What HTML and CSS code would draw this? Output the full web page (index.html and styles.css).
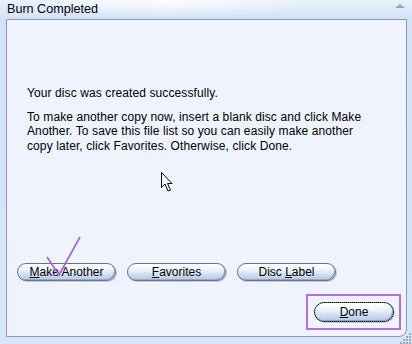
FILE: index.html
```html
<!DOCTYPE html>
<html lang="en">
<head>
    <meta charset="UTF-8">
    <meta name="viewport" content="width=device-width, initial-scale=1.0">
    <title>Burn Completed</title>
    <link rel="stylesheet" href="styles.css">
</head>
<body>

    <div class="window">
        <div class="titlebar">
            <span class="title">Burn Completed</span>
            <span class="collapse"></span>
        </div>

        <div class="panel">
            <div class="message">
                <p>Your disc was created successfully.</p>
                <p>To make another copy now, insert a blank disc and click Make Another. To save this file list so you can easily make another copy later, click Favorites. Otherwise, click Done.</p>
            </div>

            <div class="actions">
                <button class="pill wide"><u>M</u>ake Another</button>
                <button class="pill wide"><u>F</u>avorites</button>
                <button class="pill wide">Disc <u>L</u>abel</button>
            </div>

            <div class="footer">
                <div class="done-box">
                    <button class="pill done"><u>D</u>one</button>
                </div>
            </div>
        </div>

        <!-- overlays: pen mark, mouse pointer, size grip -->
        <svg class="mark" width="40" height="46" viewBox="0 0 40 46">
            <polyline points="2,21 14,39 35,1" fill="none" stroke="#a45ee0" stroke-width="1.6"/>
        </svg>

        <svg class="pointer" width="14" height="22" viewBox="0 0 14 22">
            <path d="M1.5 1.5 L1.5 16.5 L5 13 L8 20 L10.5 19 L7.5 12.5 L12 12.5 Z" fill="#fff" stroke="#000" stroke-width="1"/>
        </svg>

        <svg class="grip" width="12" height="12" viewBox="0 0 12 12">
            <g fill="#9aa6b8">
                <rect x="9" y="1" width="2" height="2"/>
                <rect x="6" y="4" width="2" height="2"/>
                <rect x="9" y="4" width="2" height="2"/>
                <rect x="3" y="7" width="2" height="2"/>
                <rect x="6" y="7" width="2" height="2"/>
                <rect x="9" y="7" width="2" height="2"/>
                <rect x="0" y="10" width="2" height="2"/>
                <rect x="3" y="10" width="2" height="2"/>
                <rect x="6" y="10" width="2" height="2"/>
                <rect x="9" y="10" width="2" height="2"/>
            </g>
        </svg>
    </div>

</body>
</html>
```

FILE: styles.css
```css
body {
    margin: 0;
    font-family: "Liberation Sans", Arial, sans-serif;
    color: #000;
}
.window {
    position: relative;
    width: 412px;
    height: 344px;
    box-sizing: border-box;
    padding: 0 5px 0 6px;
    display: flex;
    flex-direction: column;
    background: linear-gradient(180deg, #eaf2fd 0px, #d3e3f7 18px, #d6e5f8 100%);
    overflow: hidden;
}
.window::before {
    content: "";
    position: absolute;
    left: 60px;
    top: 0;
    width: 260px;
    height: 18px;
    background: radial-gradient(ellipse at 40% 0%, rgba(255,255,255,0.8), rgba(255,255,255,0) 70%);
}
.titlebar {
    position: relative;
    height: 19px;
    display: flex;
    align-items: center;
    justify-content: space-between;
}
.title {
    font-size: 12.6px;
    margin-left: 1px;
    margin-top: -1px;
}
.collapse {
    width: 0;
    height: 0;
    border-left: 5px solid transparent;
    border-right: 5px solid transparent;
    border-bottom: 4px solid #9aa5b5;
    margin-right: 2px;
    margin-top: -7px;
}
.panel {
    height: 318px;
    box-sizing: border-box;
    border: 1px solid #8f99a8;
    border-bottom-right-radius: 8px;
    background: #eef3fd;
    display: flex;
    flex-direction: column;
}
.message {
    padding: 66px 38px 0 20px;
    font-size: 12px;
    line-height: 14.5px;
    letter-spacing: 0.1px;
    flex: 1;
}
.message p {
    margin: 0 0 9px 0;
}
.actions {
    display: flex;
    gap: 11px;
    padding-left: 10px;
    margin-bottom: 13px;
}
.pill {
    height: 18px;
    box-sizing: border-box;
    padding: 0;
    font-family: "Liberation Sans", Arial, sans-serif;
    font-size: 12px;
    color: #000;
    border: 1px solid #6a7180;
    border-radius: 9px;
    background: linear-gradient(180deg, #ffffff 0%, #f0f5fc 35%, #d6e2f3 60%, #b4c8e6 100%);
    box-shadow: inset -1px -1px 0 #98a8c0, 1px 1px 0 #c3ccd8;
}
.pill u {
    text-decoration-thickness: 1px;
}
.wide {
    width: 99px;
}
.footer {
    display: flex;
    justify-content: flex-end;
    padding: 0 5px 6px 0;
}
.done-box {
    border: 2px solid #b06ee4;
    padding: 6px 5px 6px 6px;
}
.done {
    display: block;
    width: 80px;
    height: 20px;
    border-radius: 10px;
    outline: 1px dotted #000;
    outline-offset: -1px;
}
.mark {
    position: absolute;
    left: 45px;
    top: 236px;
}
.pointer {
    position: absolute;
    left: 160px;
    top: 171px;
}
.grip {
    position: absolute;
    right: 0;
    bottom: 0;
}
```
